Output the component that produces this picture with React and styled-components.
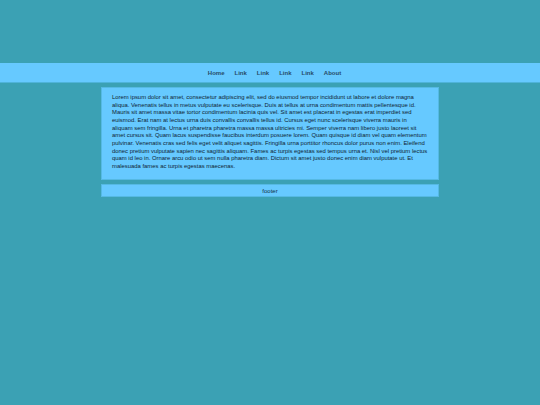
import React from 'react'
import { styled, createGlobalStyle } from 'styled-components'

const GlobalStyle = createGlobalStyle`
  html, body {
    margin: 0;
    padding: 0;
    background: #3ba1b4;
  }
  body {
    font-family: "Liberation Sans", Arial, sans-serif;
  }
`

const links = ['Home', 'Link', 'Link', 'Link', 'Link', 'About']

const lines = [
  'Lorem ipsum dolor sit amet, consectetur adipiscing elit, sed do eiusmod tempor incididunt ut labore et dolore magna',
  'aliqua. Venenatis tellus in metus vulputate eu scelerisque. Duis at tellus at urna condimentum mattis pellentesque id.',
  'Mauris sit amet massa vitae tortor condimentum lacinia quis vel. Sit amet est placerat in egestas erat imperdiet sed',
  'euismod. Erat nam at lectus urna duis convallis convallis tellus id. Cursus eget nunc scelerisque viverra mauris in',
  'aliquam sem fringilla. Urna et pharetra pharetra massa massa ultricies mi. Semper viverra nam libero justo laoreet sit',
  'amet cursus sit. Quam lacus suspendisse faucibus interdum posuere lorem. Quam quisque id diam vel quam elementum',
  'pulvinar. Venenatis cras sed felis eget velit aliquet sagittis. Fringilla urna porttitor rhoncus dolor purus non enim. Eleifend',
  'donec pretium vulputate sapien nec sagittis aliquam. Fames ac turpis egestas sed tempus urna et. Nisl vel pretium lectus',
  'quam id leo in. Ornare arcu odio ut sem nulla pharetra diam. Dictum sit amet justo donec enim diam vulputate ut. Et',
  'malesuada fames ac turpis egestas maecenas.',
]

function App() {
  return (
    <>
      <GlobalStyle />
      <PageSt>
        <NavSt>
          {links.map((l, i) => (
            <NavLinkSt key={i} href="#">{l}</NavLinkSt>
          ))}
        </NavSt>
        <ContentSt>
          <MainSt>
            <Pstyled>
              {lines.map((l, i) => (
                <LineSt key={i}>{l}</LineSt>
              ))}
            </Pstyled>
          </MainSt>
          <FooterSt>footer</FooterSt>
        </ContentSt>
      </PageSt>
    </>
  )
}

const PageSt = styled.div`
  padding-top: 63px;
  min-height: 405px;
  box-sizing: border-box;
`

const NavSt = styled.nav`
  height: 19px;
  background-color: #66c9ff;
  border-bottom: 1px solid #4fb3d9;
  display: flex;
  justify-content: center;
  align-items: center;
  padding-left: 9px;
`

const NavLinkSt = styled.a`
  font-size: 6px;
  font-weight: 700;
  color: #264c66;
  text-decoration: none;
  padding: 0 5px;
`

const ContentSt = styled.div`
  width: 338px;
  margin: 4px auto 0 101px;
  display: flex;
  flex-direction: column;
  gap: 4px;
`

const MainSt = styled.main`
  background-color: #66c9ff;
  border: 1px solid #55b9e3;
  padding: 6px 2px 10px 10px;
  height: 93px;
  box-sizing: border-box;
`

const Pstyled = styled.p`
  margin: 0;
  font-size: 5.9px;
  line-height: 7.65px;
  color: #0f2433;
`

const LineSt = styled.span`
  display: block;
  white-space: nowrap;
`

const FooterSt = styled.footer`
  height: 13px;
  box-sizing: border-box;
  background-color: #66c9ff;
  border: 1px solid #55b9e3;
  display: flex;
  justify-content: center;
  align-items: center;
  font-size: 6px;
  color: #143247;
`

export default App
